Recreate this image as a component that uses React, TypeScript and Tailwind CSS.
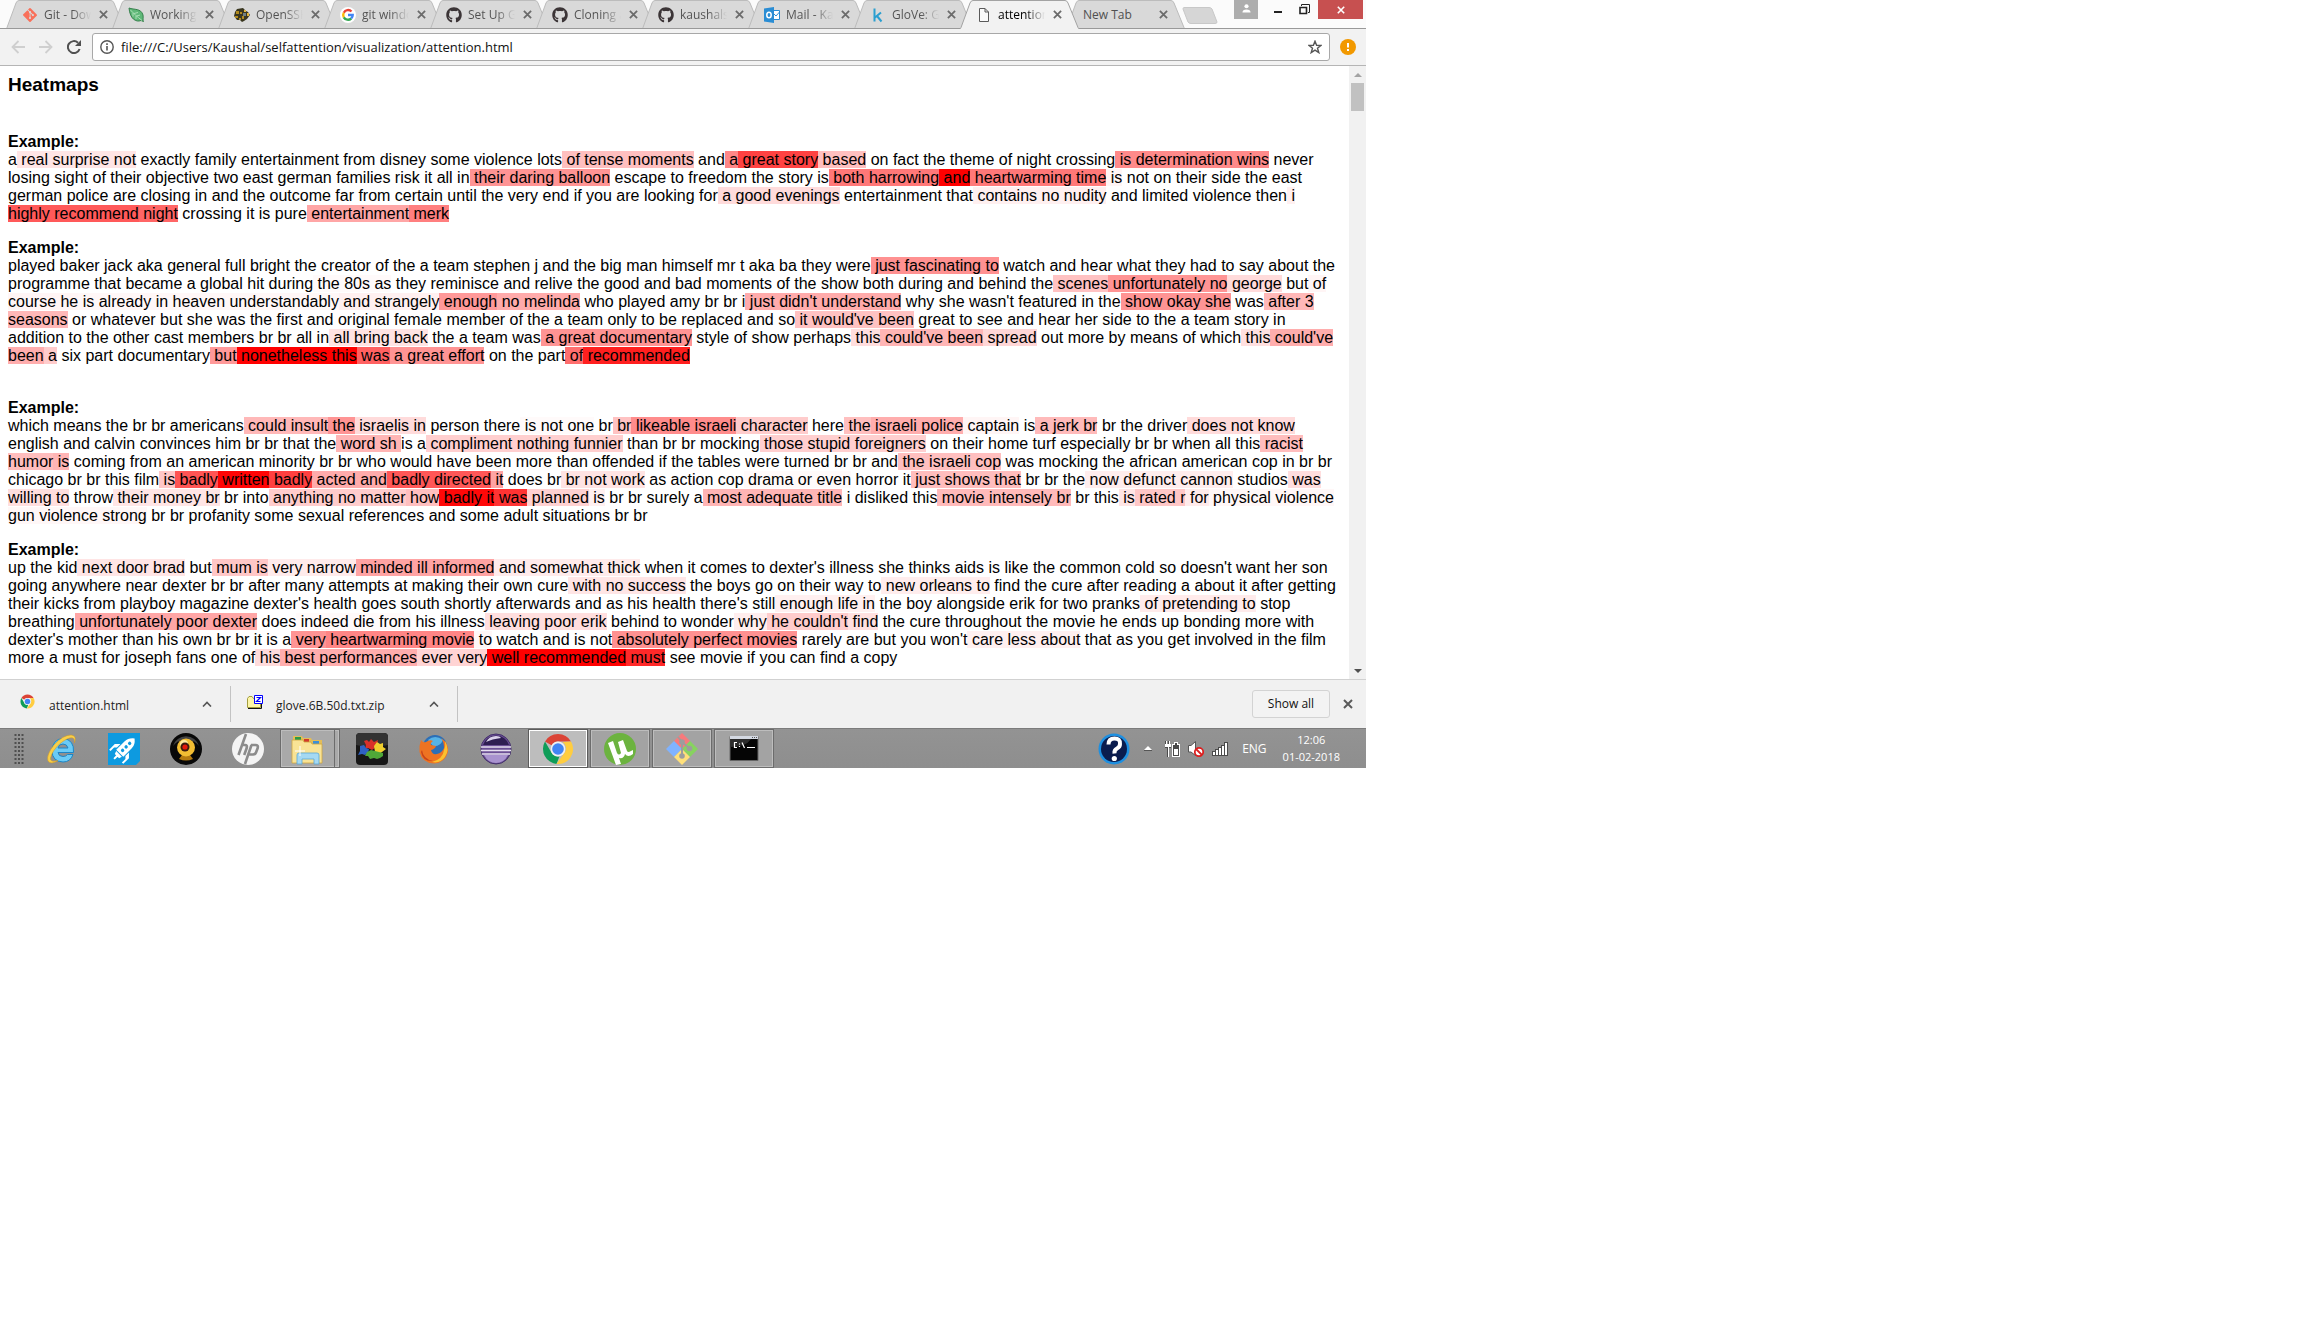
import { ReactNode } from "react";
import { FaGithub, FaGitAlt } from "react-icons/fa";

/* Attention weights are written inline: {weight: phrase}, weight in percent. */
const EXAMPLES: { text: string; wide?: boolean }[] = [
  {
    text:
      "a{10: real surprise not} exactly family entertainment from disney some violence lots{25: of tense moments} and{47: a}{74: great story}{25: based} on fact the theme of night crossing{46: is determination wins} never losing sight of their objective two east german families risk it all in{42: their daring balloon} escape to freedom the story is{53: both harrowing}{100: and}{53: heartwarming time}{4: is} not on their side the east german police are closing in and the outcome far from certain until the very end if you are looking for{14: a good evenings} entertainment that{6: contains no nudity} and limited violence then{6: i}{65: highly recommend}{60: night} crossing it is pure{35: entertainment}{50: merk}",
  },
  {
    text:
      "played baker jack aka general full bright the creator of the a team stephen j and the big man himself mr t aka ba they were{43: just fascinating to} watch and hear what they had to say about the programme that became a global hit during{2: the 80s as} they reminisce and relive the good and bad moments of the show both during and behind the{24: scenes}{42: unfortunately no}{14: george} but{4: of course he}{3: is already in heaven understandably}{6: and strangely}{40: enough}{33: no melinda} who played amy br br i{33: just didn't understand} why she wasn't featured in the{42: show okay she} was{28: after 3 seasons} or whatever but she was the first and original female member of the a team only to be replaced and so{24: it would've been} great to see and hear her side to the a team story in addition to the other cast members br br all in{11: all bring back} the a team was{42: a great documentary} style of show perhaps{13: this}{29: could've been}{16: spread} out more by means of which{12: this}{32: could've been}{20: a} six part documentary{40: but}{100: nonetheless this}{62: was}{42: a great effort} on the part{57: of}{88: recommended}",
  },
  {
    wide: true,
    text:
      "which means the br br americans{28: could insult}{42: the}{14: israelis in} person there{2: is not one} br{24: br}{45: likeable israeli}{20: character} here{25: the}{32: israeli police}{4: captain} is{27: a jerk br} br the driver{14: does not know} english and calvin convinces him br br that the{29: word sh }is a{19: compliment nothing funnier} than br br mocking{19: those stupid foreigners} on their home turf especially br br when all this{26: racist humor}{29: is} coming from an american minority br br who would have been more than offended if the tables were turned br br and{25: the israeli cop} was mocking the african american cop in br br chicago br br this film{22: is}{67: badly}{98: written}{75: badly}{33: acted and}{66: badly directed}{36: it} does br{11: br not work} as action cop{2: drama or even} horror it{26: just shows that} br br the{7: now defunct cannon} studios{13: was willing to} throw{10: their money br} br into{20: anything no matter}{25: how}{97: badly it}{80: was}{18: planned}{6: is} br br surely a{29: most adequate title} i disliked this{27: movie intensely br} br this{10: is}{22: rated r}{8: for}{3: physical violence gun violence strong} br br profanity some sexual references and some adult situations br br",
  },
  {
    text:
      "up the kid{10: next door brad} but{22: mum is}{8: very narrow}{36: minded ill informed}{8: and somewhat thick} when it comes to dexter's illness she thinks aids is like the common cold so doesn't want her son going anywhere near dexter br br after many attempts at making their own cure{10: with no success} the boys go on their way to{7: new orleans to} find the cure after reading a about it after getting their kicks from playboy magazine dexter's health goes south shortly afterwards and as his health there's still{6: enough life in} the boy alongside erik for two pranks{8: of pretending to} stop breathing{35: unfortunately poor dexter} does{2: indeed die from} his illness{13: leaving poor erik} behind to wonder{7: why}{20: he couldn't}{12: find} the cure throughout the movie he ends up bonding more with dexter's mother than his own br br it is a{42: very}{48: heartwarming movie}{3: to} watch and is not{43: absolutely perfect movies} rarely are but you won't{6: care less about} that as you get involved in the film more a must for joseph fans one of{14: his}{32: best performances}{17: ever very}{100: well recommended}{84: must} see movie if you can find a copy",
  },
];

function Heat({ text }: { text: string }) {
  return (
    <p>
      {text.split(/(\{[^}]*\})/).map((part, i) => {
        if (!part.startsWith("{")) return part;
        const [weight, phrase] = part.slice(1, -1).split(":");
        return (
          <span key={i} style={{ backgroundColor: `rgba(255,0,0,${Number(weight) / 100})` }}>
            {phrase}
          </span>
        );
      })}
    </p>
  );
}

function ChromeLogo({ className }: { className: string }) {
  return (
    <svg viewBox="0 0 32 32" className={className} aria-hidden="true">
      <path d="M16 1 A15 15 0 0 1 29 8.500 H16 A7.500 7.500 0 0 0 9.500 12.300 L3 8.500 A15 15 0 0 1 16 1Z" fill="#db4437" />
      <path d="M3 8.500 L9.500 19.800 A7.500 7.500 0 0 0 17.500 23.300 L14.500 30.900 A15 15 0 0 1 3 8.500Z" fill="#0f9d58" />
      <path d="M29 8.500 A15 15 0 0 1 14.500 30.900 L22.500 19.800 A7.500 7.500 0 0 0 20.500 9 Z" fill="#ffcd40" />
      <circle cx="16" cy="16" r="7.400" fill="#f1f1f1" />
      <circle cx="16" cy="16" r="5.800" fill="#4285f4" />
    </svg>
  );
}

const GitIcon = <FaGitAlt className="size-4 text-[#f9705a]" />;
const LeafIcon = (
  <svg viewBox="0 0 16 16" className="size-4">
    <path d="M1 1 C6 3 13 1 15 8 C15.500 11 14.500 13 15.500 14.500 L13 13.500 C8 15.500 2 12 1 1Z" fill="#5fb878" stroke="#36804c" />
    <path d="M2.500 3 C6 7 9 9.500 14 13.500 M6 6.500 L10 5.500 M8.500 9 L12 8 M5 6 L5 9.500 M8 9 L8 12" stroke="#a9dfb4" fill="none" />
  </svg>
);
const FishIcon = (
  <svg viewBox="0 0 16 16" className="size-4">
    <path d="M1 5 L3 2 L9 1 L12 4 L14 5 L16 8 L13 12 L10 14 L8 15 L6 13 L3 13 L0 9Z" fill="#39361f" />
    <path d="M2 4h3v3h-3z M6 5h2v2h-2z M1 9h3v2h-3z M8 9h2v3h-2z M5 11h2v2h-2z" fill="#b08a1e" />
    <path d="M10 3h2v2h-2z M13 6h2v3h-2z" fill="#e0b53c" />
    <path d="M9 6h3v3h-3z" fill="#6f7f85" />
  </svg>
);
const GoogleIcon = (
  <svg viewBox="0 0 16 16" className="size-4">
    <circle cx="8" cy="8" r="8" fill="#fff" />
    <g fill="none" strokeWidth="2.400">
      <path d="M11.500 4.500 A4.800 4.800 0 0 0 3.800 5.700" stroke="#ea4335" />
      <path d="M3.800 5.700 A4.800 4.800 0 0 0 3.800 10.300" stroke="#fbbc05" />
      <path d="M3.800 10.300 A4.800 4.800 0 0 0 11.200 11.500" stroke="#34a853" />
      <path d="M11.200 11.500 A4.800 4.800 0 0 0 12.700 8 H8" stroke="#4285f4" />
    </g>
  </svg>
);
const HubIcon = <FaGithub className="size-4 text-[#3b3436]" />;
const MailIcon = (
  <svg viewBox="0 0 16 16" className="size-4">
    <path d="M8 3.500h7.500v9H8z" fill="#fff" stroke="#2a8dd4" />
    <path d="M9 6l3 3 3.500-4" fill="none" stroke="#2a8dd4" />
    <path d="M0 1.500L10 0v16L0 14.500z" fill="#2a8dd4" />
    <ellipse cx="5" cy="8" rx="2.200" ry="2.800" fill="none" stroke="#fff" strokeWidth="1.500" />
  </svg>
);
const KaggleIcon = (
  <svg viewBox="0 0 16 16" className="size-4">
    <path d="M4.500 1.500v13M11 5.500l-6 5M7 9l4.500 5.500" stroke="#2b9fd0" strokeWidth="2" fill="none" />
  </svg>
);
const FileIcon = (
  <svg viewBox="0 0 16 16" className="size-4">
    <path d="M3.500 1.500h5.500l3.500 3.500v9.500h-9z M9 1.500v3.500h3.500" fill="#fafafa" stroke="#5a5a5a" />
  </svg>
);

const TABS: { title: string; icon?: ReactNode; active?: boolean }[] = [
  { title: "Git - Downloads", icon: GitIcon },
  { title: "Working with", icon: LeafIcon },
  { title: "OpenSSH", icon: FishIcon },
  { title: "git windows", icon: GoogleIcon },
  { title: "Set Up Git", icon: HubIcon },
  { title: "Cloning a", icon: HubIcon },
  { title: "kaushalshetty", icon: HubIcon },
  { title: "Mail - Kaushal", icon: MailIcon },
  { title: "GloVe: Global", icon: KaggleIcon },
  { title: "attention.html", icon: FileIcon, active: true },
  { title: "New Tab" },
];

function Cross({ className }: { className: string }) {
  return (
    <svg viewBox="0 0 10 10" className={className} aria-hidden="true">
      <path d="M1 1l8 8M9 1l-8 8" stroke="currentColor" strokeWidth="2" />
    </svg>
  );
}

function Tab({ title, icon, active }: { title: string; icon?: ReactNode; active?: boolean }) {
  return (
    <div className={active ? "relative z-10 h-[29px] w-[106px] shrink-0" : "relative h-[29px] w-[106px] shrink-0"}>
      <svg viewBox="0 0 120 29" className="absolute left-0 top-0 h-[29px] w-[120px]" aria-hidden="true">
        <path
          d="M0 28.500 L1 27.500 L10 3 Q11 .5 13 .5 H105 Q107 .5 108 3 L118 27.500 L119 28.500"
          fill={active ? "#f2f2f2" : "#d9d9d9"}
          stroke={active ? "#a3a3a3" : "#bcbcbc"}
        />
        {active ? <path d="M1 28.500H118" stroke="#f2f2f2" /> : <path d="M0 28.500H120" stroke="#999" />}
      </svg>
      <div className="relative flex h-[29px] items-center pl-4">
        {icon && <span className="mr-[6px] shrink-0">{icon}</span>}
        <button
          className={
            active
              ? "min-w-0 flex-1 overflow-hidden whitespace-nowrap bg-linear-to-r from-black from-60% to-transparent bg-clip-text text-left text-xs text-transparent"
              : icon
                ? "min-w-0 flex-1 overflow-hidden whitespace-nowrap bg-linear-to-r from-[#505050] from-60% to-transparent bg-clip-text text-left text-xs text-transparent"
                : "min-w-0 flex-1 overflow-hidden whitespace-nowrap pl-px text-left text-xs text-[#505050]"
          }
        >
          {title}
        </button>
        <button aria-label={`Close ${title}`} className="ml-2 shrink-0 pr-1 text-[#6b6b6b]">
          <Cross className="size-[9px]" />
        </button>
      </div>
    </div>
  );
}

function TabStrip() {
  return (
    <div className="flex h-[29px] border-b border-[#999] bg-[#fbfbfb] pl-[6px]">
      <div className="flex">
        {TABS.map((t, i) => (
          <Tab key={i} {...t} />
        ))}
      </div>
      <button aria-label="Open new tab" className="ml-[10px] mt-[7px] h-[18px]">
        <svg viewBox="0 0 36 18" className="h-[18px] w-9">
          <path d="M2 .5H27Q29 .5 30 2L35 15Q35 16.500 33 16.500H9Q7 16.500 6 15L1 2Q1 .5 2 .5Z" fill="#d6d6d6" stroke="#c8c8c8" />
        </svg>
      </button>
      <div className="ml-auto flex h-[19px] pr-[3px]">
        <button aria-label="Profile" className="flex w-6 items-center justify-center bg-[#adadad]">
          <svg viewBox="0 0 10 10" className="mb-[3px] size-[9px]">
            <circle cx="5" cy="2.500" r="2.300" fill="#fff" />
            <path d="M.5 9.500Q.5 6 5 6T9.500 9.500z" fill="#fff" />
          </svg>
        </button>
        <button aria-label="Minimize" className="flex w-9 items-end justify-center pb-[6px] pl-1">
          <span className="h-[2px] w-2 bg-[#222]" />
        </button>
        <button aria-label="Restore" className="flex w-6 items-center justify-center pr-1">
          <svg viewBox="0 0 11 11" className="size-[11px] shrink-0">
            <path d="M2.500 2V.5H10.500V8.500H9" fill="none" stroke="#222" />
            <path d="M1 3.500H7.500V9.500H1Z" fill="none" stroke="#222" strokeWidth="1.600" />
          </svg>
        </button>
        <button aria-label="Close window" className="flex w-[45px] items-center justify-center bg-[#c75050] text-white">
          <Cross className="size-2" />
        </button>
      </div>
    </div>
  );
}

function Toolbar() {
  return (
    <div className="flex h-[37px] items-center border-b border-[#b5b5b5] bg-[#f2f2f2] pl-[11px] pr-[10px]">
      <button aria-label="Back" className="mr-[14px]">
        <svg viewBox="0 0 14 14" className="size-[14px]">
          <path d="M14 7H1.500M7.500 1L1.500 7L7.500 13" fill="none" stroke="#cfcfcf" strokeWidth="1.800" />
        </svg>
      </button>
      <button aria-label="Forward" className="mr-[14px]">
        <svg viewBox="0 0 14 14" className="size-[14px]">
          <path d="M0 7H12.500M6.500 1L12.500 7L6.500 13" fill="none" stroke="#cfcfcf" strokeWidth="1.800" />
        </svg>
      </button>
      <button aria-label="Reload" className="mr-[11px]">
        <svg viewBox="0 0 14 14" className="size-[14px]">
          <path d="M12.600 9A6 6 0 1 1 11 2.700" fill="none" stroke="#505050" strokeWidth="2" />
          <path d="M14 0V6H8z" fill="#505050" />
        </svg>
      </button>
      <div className="flex h-7 flex-1 items-center rounded-[3px] border border-[#a8a8a8] bg-white px-[7px]">
        <svg viewBox="0 0 14 14" className="mr-[7px] size-[14px] shrink-0" aria-hidden="true">
          <circle cx="7" cy="7" r="6.200" fill="none" stroke="#555" strokeWidth="1.400" />
          <path d="M7 6V10.500M7 3.300V4.900" stroke="#555" strokeWidth="1.600" />
        </svg>
        <input
          aria-label="Address"
          defaultValue="file:///C:/Users/Kaushal/selfattention/visualization/attention.html"
          className="min-w-0 flex-1 bg-transparent pt-px text-[13px] text-[#111] outline-none"
        />
        <button aria-label="Bookmark">
          <svg viewBox="0 0 14 14" className="size-[14px]">
            <path d="M7 1.200L8.600 5.300L13 5.500L9.500 8.200L10.800 12.600L7 10.100L3.200 12.600L4.500 8.200L1 5.500L5.400 5.300Z" fill="none" stroke="#555" strokeWidth="1.400" />
          </svg>
        </button>
      </div>
      <button aria-label="Update" className="ml-[10px]">
        <svg viewBox="0 0 16 16" className="size-4">
          <circle cx="8" cy="8" r="8" fill="#f29900" />
          <path d="M8 4V8.500M8 10V12" stroke="#fff" strokeWidth="2" />
        </svg>
      </button>
    </div>
  );
}

function PageView() {
  return (
    <div className="flex bg-white">
      <main className="min-w-0 flex-1 px-2 pb-3 pt-2 font-['Liberation_Sans',Arial,sans-serif] text-base leading-[18px] text-black">
        <h3 className="mb-[38px] text-[19px] font-bold leading-[21px]">Heatmaps</h3>
        {EXAMPLES.map((ex, i) => (
          <section key={i} className={i === 0 ? "" : ex.wide ? "mt-[34px]" : "mt-4"}>
            <h4 className="font-bold">Example:</h4>
            <Heat text={ex.text} />
          </section>
        ))}
      </main>
      <div className="flex w-[17px] flex-col items-center bg-[#f1f1f1]">
        <button aria-label="Scroll up" className="flex h-[17px] items-center">
          <svg viewBox="0 0 8 4" className="h-1 w-2">
            <path d="M4 0L8 4H0z" fill="#a3a3a3" />
          </svg>
        </button>
        <div className="h-7 w-[13px] bg-[#c1c1c1]" />
        <button aria-label="Scroll down" className="mt-auto flex h-[17px] items-center">
          <svg viewBox="0 0 8 4" className="h-1 w-2">
            <path d="M0 0H8L4 4z" fill="#505050" />
          </svg>
        </button>
      </div>
    </div>
  );
}

function Download({ name, children }: { name: string; children: ReactNode }) {
  return (
    <div className="flex h-9 w-[227px] items-center border-r border-[#c3c3c3] pl-4 pr-[18px]">
      <span className="mr-3 flex w-[17px] pb-[5px]">{children}</span>
      <button className="pt-1 text-xs text-[#222]">{name}</button>
      <button aria-label={`Options for ${name}`} className="ml-auto">
        <svg viewBox="0 0 10 6" className="h-[6px] w-[10px]">
          <path d="M1 5.500L5 1.500L9 5.500" fill="none" stroke="#555" strokeWidth="1.600" />
        </svg>
      </button>
    </div>
  );
}

function Shelf() {
  return (
    <div className="flex h-[49px] items-center border-t border-[#d1d1d1] bg-[#f1f1f1] pl-1">
      <Download name="attention.html">
        <ChromeLogo className="size-[15px]" />
      </Download>
      <Download name="glove.6B.50d.txt.zip">
        <svg viewBox="0 0 16 14" className="h-[14px] w-4">
          <path d="M.5 3.500L2 1.500H5L6.500 3.500H13.500V12.500H.5z" fill="#fdf6a8" stroke="#a39d3f" />
          <path d="M1 13.500H14.500V8" fill="none" stroke="#111" />
          <path d="M7.500 .5H15.500V8.500H7.500z" fill="#fff" stroke="#00f" />
          <path d="M9.500 2.500H13.500L9.500 6.500H13.500" fill="none" stroke="#00f" strokeWidth="1.200" />
        </svg>
      </Download>
      <button className="mb-px ml-auto h-7 w-[78px] rounded-[3px] border border-[#d3d3d3] bg-[#f3f3f3] text-xs text-[#111]">Show all</button>
      <button aria-label="Close downloads" className="mb-px ml-[13px] mr-[13px] text-[#5a5a5a]">
        <Cross className="size-[10px]" />
      </button>
    </div>
  );
}

const IEIcon = (
  <svg viewBox="0 0 32 32" className="size-8">
    <path d="M27.500 19.500H12Q12.500 23.500 17 23.500Q20 23.500 21.500 21.500H27Q24.500 29 17 29Q6 28.500 6 17.500Q7 6 17 5.500Q28.500 6.500 27.500 19.500Z M12 15H22Q21 11 17 11Q12.500 11 12 15Z" fill="#6bcbf6" stroke="#1c86c7" fillRule="evenodd" />
    <path d="M28.500 10Q31 2.500 25 2Q17 2 8 12Q0 22 2 28Q5 32 12 27.500Q4 30 4.500 25Q6 18 14 10.500Q23 3.500 27 5Q29 6 28.500 10Z" fill="#f8cf4a" stroke="#d79b1c" strokeWidth=".5" />
  </svg>
);
const RocketIcon = (
  <svg viewBox="0 0 32 32" className="size-8">
    <path d="M0 0H32V28L28 32H0z" fill="#0d9ae0" />
    <g transform="rotate(45 16 16)">
      <path d="M16 1Q21 5 21 10V22H11V10Q11 5 16 1Z" fill="#fff" />
      <path d="M10 15L6 19V27H8V22L10 20zM22 15L26 19V27H24V22L22 20zM12 23H20L19 26H13zM15 26H17V30H15z" fill="#fff" />
      <circle cx="16" cy="8" r="1.700" fill="#0d9ae0" />
      <circle cx="16" cy="13" r="1.700" fill="#0d9ae0" />
      <circle cx="16" cy="18" r="1.700" fill="#0d9ae0" />
    </g>
  </svg>
);
const WebcamIcon = (
  <svg viewBox="0 0 32 32" className="size-8">
    <circle cx="16" cy="16" r="16" fill="#080808" />
    <path d="M3 13A13.500 13.500 0 0 1 29 13Q24 6 16 7Q8 6 3 13Z" fill="#444" />
    <path d="M12 22L9 26Q16 29 23 26L20 22z" fill="#b57b10" />
    <circle cx="16" cy="14.500" r="9" fill="#f2bd33" />
    <circle cx="14" cy="11" r="4" fill="#fde9a0" />
    <circle cx="15" cy="14" r="4.500" fill="#3b1a10" />
    <circle cx="15" cy="14" r="2.600" fill="#e3170b" />
  </svg>
);
const HpIcon = (
  <svg viewBox="0 0 32 32" className="size-8">
    <circle cx="16" cy="16" r="16" fill="#f4f4f4" />
    <path d="M14 1L6.500 22M9.500 12H13Q15.500 12 14.700 15L12.200 22M19.500 12L13 31M19 12H23.500Q26.500 12 25.700 15L24 19.500Q23.300 21.500 21 21.500H16.500" fill="none" stroke="#8c8c8c" strokeWidth="2.600" />
  </svg>
);
const FolderIcon = (
  <svg viewBox="0 0 32 32" className="size-8">
    <path d="M2 3H11L12 5H20L21 7H31V30H2z" fill="#e3bd58" />
    <path d="M4 4h6v3H4z" fill="#2c9b44" />
    <path d="M13 6h5v3h-5z" fill="#d33a2b" />
    <path d="M22 8h6v3h-6z" fill="#3d8fd6" />
    <path d="M1 7H12L13 9H20L21 11H31V30H1z" fill="#f9e395" stroke="#cfa640" strokeWidth=".8" />
    <path d="M6 31V22Q6 20 8 20H26Q28 20 28 22V31H23V26H11V31z" fill="#a5d9f3" stroke="#5ba7d4" strokeWidth=".8" />
    <path d="M9 13V23M4 18H14" stroke="#fff" strokeWidth="1" />
  </svg>
);
const SplashIcon = (
  <svg viewBox="0 0 32 32" className="size-8">
    <rect width="32" height="32" rx="4" fill="#171717" />
    <path d="M0 4Q0 0 4 0H28Q32 0 32 4V12Q16 16 0 12z" fill="#333" />
    <path d="M8 8l3-1 2 2 2-3 3 3 4-2-1 4 2 2-4 2-3 2-4-2-3 1 1-4z" fill="#d9302a" />
    <path d="M18 13l3-4 3 2 3-1 0 4 3 2-4 3-3 2-4-2z" fill="#f0cf2e" />
    <path d="M4 13l4-1 2 3 3 1-1 4-3 2-3-1-4 1 2-4z" fill="#2f62c4" />
    <path d="M11 19l4-2 4 1 4 1 4 1 0 3-3 2-3 1-3-1-4 1-2-3-3 0z" fill="#4fa838" />
  </svg>
);
const FirefoxIcon = (
  <svg viewBox="0 0 32 32" className="size-8">
    <circle cx="17" cy="14" r="12" fill="#2c6fb7" />
    <path d="M10 7Q17 1 25 7Q22 14 15 13z" fill="#57b3e6" />
    <path d="M3 7Q5 10 8 9Q12 6 15 8Q12 10 13 12L18 13Q17 16 13 17Q14 22 19 21Q24 20 26 15Q26 9 23 5Q31 10 30 19Q27 30 16 30.500Q4 30 1.500 19Q1 12 3 7Z" fill="#ee7322" />
    <path d="M27 8Q32 17 27 24Q22 31 14 29Q25 26 26 17Q28 13 27 8Z" fill="#fbc12f" />
    <path d="M4 17Q5 26 15 28Q5 29 3 19z" fill="#c8441a" />
  </svg>
);
const EclipseIcon = (
  <svg viewBox="0 0 32 32" className="size-8">
    <circle cx="16" cy="16" r="15" fill="#6b4f95" stroke="#43306b" />
    <path d="M3 12Q6 3 16 2.500Q26 3 29 12z" fill="#2e1e52" />
    <path d="M6 9Q9 3 16 3Q20 3 21 5Q12 6 6 9Z" fill="#d9d0ea" />
    <path d="M4 22H28Q24 30 16 30Q8 30 4 22Z" fill="#a993cf" />
    <path d="M1 14H31M1 17.500H31M2 21H30" stroke="#e6dff0" strokeWidth="1.300" />
  </svg>
);
const TorrentIcon = (
  <svg viewBox="0 0 32 32" className="size-8">
    <circle cx="16" cy="16" r="16" fill="#6cb33f" />
    <path d="M4 10L9 8L13 20Q15 23 17 20L14 9L19 7L23 18Q24 20 27 18L29 17V21Q24 25 21 21Q20 26 15 25L17 31L12 32z" fill="#fff" />
  </svg>
);
const GitBashIcon = (
  <svg viewBox="0 0 32 32" className="size-8">
    <path d="M16 0L24 8L16 16L8 8z" fill="#f77a7c" />
    <path d="M8 8L16 16L8 24L0 16z" fill="#80b3ff" />
    <path d="M24 8L32 16L24 24L16 16z" fill="#87d35f" />
    <path d="M16 16L24 24L16 32L8 24z" fill="#ffe07a" />
    <path d="M12 4L16 9V23M16 9L23 15" stroke="#9d9d9d" strokeWidth="2" fill="none" />
    <g fill="#9d9d9d">
      <circle cx="16" cy="9" r="2.800" />
      <circle cx="23.500" cy="15.500" r="2.800" />
      <circle cx="16" cy="23" r="2.800" />
    </g>
  </svg>
);
const CmdIcon = (
  <svg viewBox="0 0 32 32" className="size-8">
    <path d="M2 3.500H30V27.500H2z" fill="#050505" stroke="#666" />
    <path d="M2.500 14Q18 14 23 6H2.500z" fill="#2c2c2c" />
    <path d="M2 3H30V6H2z" fill="#d4d9e2" />
    <path d="M24 4.500H29" stroke="#555" strokeDasharray="1 1" />
    <path d="M9 9.500H6.500V14.500H9M11.500 10.500V11.500M11.500 13V14M14 9.500L16.500 15M19 14.500H27" stroke="#fff" strokeWidth="1.200" fill="none" />
  </svg>
);

const TASKS: { name: string; icon: ReactNode; frame?: "plain" | "stack" | "active" }[] = [
  { name: "Internet Explorer", icon: IEIcon },
  { name: "Launcher", icon: RocketIcon },
  { name: "Webcam", icon: WebcamIcon },
  { name: "HP", icon: HpIcon },
  { name: "File Explorer", icon: FolderIcon, frame: "stack" },
  { name: "Splash", icon: SplashIcon },
  { name: "Firefox", icon: FirefoxIcon },
  { name: "Eclipse", icon: EclipseIcon },
  { name: "Chrome", icon: <ChromeLogo className="size-8" />, frame: "active" },
  { name: "Torrent", icon: TorrentIcon, frame: "plain" },
  { name: "Git Bash", icon: GitBashIcon, frame: "plain" },
  { name: "Command Prompt", icon: CmdIcon, frame: "plain" },
];

const FRAMES = {
  none: "flex h-full w-[60px] items-center justify-center",
  plain: "flex h-full w-[60px] items-center justify-center border border-[#6c6c6c] bg-[#a3a3a3] ring-1 ring-inset ring-[#bdbdbd]",
  stack: "flex h-full w-[60px] items-center border border-[#6c6c6c] bg-[#a9a9a9] pl-[10px] ring-1 ring-inset ring-[#bdbdbd]",
  active: "flex h-full w-[60px] items-center justify-center border border-[#5c5c5c] bg-[#bdbdbd] ring-1 ring-inset ring-white",
};

function Taskbar() {
  return (
    <div className="flex h-10 items-center border-t border-[#7c7c7c] bg-linear-to-b from-[#939393] to-[#8e8e8e]">
      <svg viewBox="0 0 10 32" className="ml-[14px] mr-2 h-8 w-[10px]" aria-hidden="true">
        <path d="M1.500 1V32M5 1V32M8.500 1V32" stroke="#4f4f4f" strokeWidth="2" strokeDasharray="2 2" />
      </svg>
      <div className="flex h-full gap-[2px]">
        {TASKS.map((t) => (
          <button key={t.name} aria-label={t.name} className={FRAMES[t.frame ?? "none"]}>
            {t.icon}
            {t.frame === "stack" && <span className="ml-[11px] h-full w-px bg-[#6c6c6c]" />}
          </button>
        ))}
      </div>
      <div className="ml-auto flex items-center text-xs text-white">
        <button aria-label="Help">
          <svg viewBox="0 0 32 32" className="size-8">
            <circle cx="16" cy="16" r="15.500" fill="#1e8fe0" />
            <circle cx="16" cy="16" r="13" fill="#0a1c4e" />
            <path d="M10.500 11.500Q10.500 5.500 16.500 5.500T22 11Q22 14 19 15.500T16.500 20.500" fill="none" stroke="#fff" strokeWidth="4" />
            <circle cx="16.300" cy="25.500" r="2.600" fill="#fff" />
          </svg>
        </button>
        <button aria-label="Hidden icons" className="ml-[14px]">
          <svg viewBox="0 0 8 5" className="h-[5px] w-2">
            <path d="M4 0L8 4H0z" fill="#fff" />
            <path d="M0 4.500H8" stroke="#555" />
          </svg>
        </button>
        <button aria-label="Battery" className="ml-3">
          <svg viewBox="0 0 16 16" className="size-4" shapeRendering="crispEdges">
            <path d="M1 0h2v3h1V0h2v3h1v4H5v9H3V7H1V3h0z" fill="#4a4a4a" />
            <path d="M2 0h1v3h2V0h1v3h1v3H5v10H4V6H1V3h1z" fill="#fff" />
            <path d="M8 3h2V1h4v2h2v13H8z" fill="#fff" />
            <path d="M9 4h2V2h2v2h2v11H9z" fill="#4a4a4a" />
            <path d="M10 8h4v6h-4z" fill="#fff" />
          </svg>
        </button>
        <button aria-label="Volume" className="ml-2">
          <svg viewBox="0 0 16 16" className="size-4">
            <path d="M.5 4.500H3L7.500 .5V14.500L3 11H.5z" fill="#fff" stroke="#555" />
            <circle cx="11" cy="11" r="4.200" fill="#fff" stroke="#dc1e1e" strokeWidth="1.800" />
            <path d="M8 8L14 14" stroke="#dc1e1e" strokeWidth="1.800" />
          </svg>
        </button>
        <button aria-label="Network" className="ml-2">
          <svg viewBox="0 0 16 14" className="h-[14px] w-4" shapeRendering="crispEdges">
            <path d="M0 9h3V7h3V5h3V3h3V0h4v14H0z" fill="#4a4a4a" />
            <path d="M1 10h2v3H1zM4 8h2v5H4zM7 6h2v7H7zM10 4h2v9h-2zM13 1h2v12h-2z" fill="#fff" />
          </svg>
        </button>
        <button className="ml-[14px]">ENG</button>
        <button className="ml-4 mr-[26px] pb-px text-center text-[11px] leading-[17px]">
          <span className="block">12:06</span>
          <span className="block">01-02-2018</span>
        </button>
      </div>
    </div>
  );
}

export default function App() {
  return (
    <div className="min-h-screen bg-white font-['Open_Sans','Noto_Sans',sans-serif]">
      <div className="w-full max-w-[1366px]">
        <TabStrip />
        <Toolbar />
        <PageView />
        <Shelf />
        <Taskbar />
      </div>
    </div>
  );
}
